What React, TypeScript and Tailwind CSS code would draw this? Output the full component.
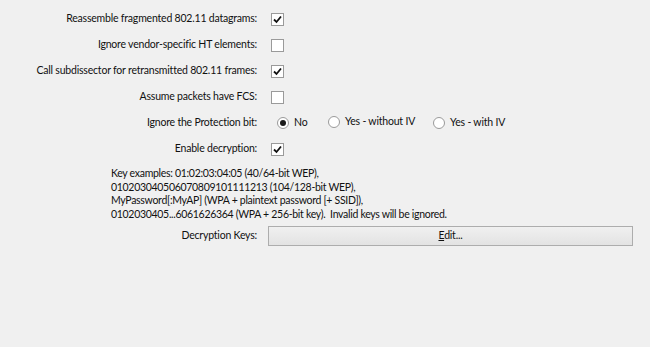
import React from "react";

function Check({ checked }: { checked: boolean }) {
  return (
    <span className="inline-flex h-[13px] w-[13px] items-center justify-center border border-[#9a9a9a] bg-white">
      {checked && (
        <svg width="9" height="9" viewBox="0 0 9 9">
          <path d="M1 4.5 L3.5 7 L8 1.5" fill="none" stroke="#111" strokeWidth="1.8" />
        </svg>
      )}
    </span>
  );
}

function Radio({ checked, label }: { checked: boolean; label: string }) {
  return (
    <span className="inline-flex items-center gap-[5px]">
      <span className="inline-flex h-[12px] w-[12px] items-center justify-center rounded-full border border-[#9a9a9a] bg-white">
        {checked && <span className="h-[6px] w-[6px] rounded-full bg-[#1a1a1a]" />}
      </span>
      <span>{label}</span>
    </span>
  );
}

function Row({ label, children }: { label: string; children: React.ReactNode }) {
  return (
    <div className="flex h-[26px] items-center">
      <div className="w-[257px] text-right">{label}</div>
      <div className="flex items-center pl-[14px]">{children}</div>
    </div>
  );
}

export default function App() {
  return (
    <div
      className="h-[347px] w-[650px] bg-[#f0f0f0] pt-[6px] text-[10.5px] tracking-[-0.2px] text-[#111]"
      style={{ fontFamily: 'Lato, "Noto Sans", sans-serif' }}
    >
      <Row label="Reassemble fragmented 802.11 datagrams:">
        <Check checked />
      </Row>
      <Row label="Ignore vendor-specific HT elements:">
        <Check checked={false} />
      </Row>
      <Row label="Call subdissector for retransmitted 802.11 frames:">
        <Check checked />
      </Row>
      <Row label="Assume packets have FCS:">
        <Check checked={false} />
      </Row>
      <Row label="Ignore the Protection bit:">
        <div className="flex items-center pl-[6px]">
          <div className="w-[51px]">
            <Radio checked label="No" />
          </div>
          <div className="w-[105px]">
            <Radio checked={false} label="Yes - without IV" />
          </div>
          <Radio checked={false} label="Yes - with IV" />
        </div>
      </Row>
      <Row label="Enable decryption:">
        <Check checked />
      </Row>
      <div className="mt-[5px] pl-[111px] leading-[13.5px] tracking-[-0.3px]">
        <div>Key examples: 01:02:03:04:05 (40/64-bit WEP),</div>
        <div>010203040506070809101111213 (104/128-bit WEP),</div>
        <div>MyPassword[:MyAP] (WPA + plaintext password [+ SSID]),</div>
        <div>0102030405...6061626364 (WPA + 256-bit key).&nbsp; Invalid keys will be ignored.</div>
      </div>
      <div className="mt-[5px] flex h-[20px] items-center">
        <div className="w-[257px] text-right">Decryption Keys:</div>
        <div className="pl-[11px]">
          <button className="flex h-[20px] w-[365px] items-center justify-center border border-[#adadad] bg-gradient-to-b from-[#f0f0f0] to-[#e3e3e3]">
            <span>
              <span className="underline">E</span>dit...
            </span>
          </button>
        </div>
      </div>
    </div>
  );
}
